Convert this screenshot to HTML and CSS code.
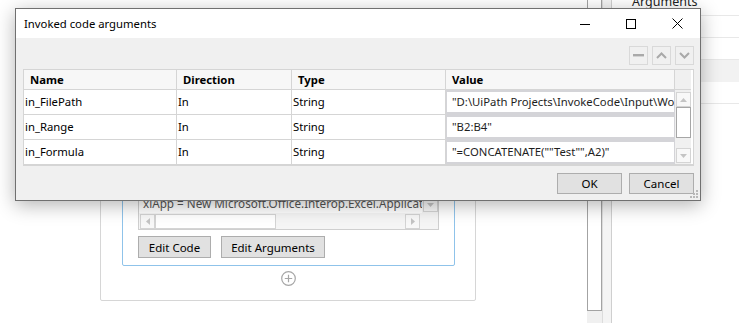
FILE: index.html
```html
<!DOCTYPE html>
<html lang="en">
<head>
    <meta charset="UTF-8">
    <title>Invoked code arguments</title>
    <link rel="stylesheet" href="styles.css">
</head>
<body>
    <div class="workspace">
        <div class="canvas">
            <div class="sequence">
                <div class="activity">
                    <div class="editor">
                        <div class="code">xlApp = New Microsoft.Office.Interop.Excel.Application</div>
                        <div class="vscroll">
                            <span class="arrow-box"><svg width="7" height="4" viewBox="0 0 7 4"><path d="M0 0h7L3.5 4z" fill="#c4c4c4"/></svg></span>
                        </div>
                        <div class="hscroll">
                            <span class="arrow-box"><svg width="4" height="7" viewBox="0 0 4 7"><path d="M4 0v7L0 3.5z" fill="#c4c4c4"/></svg></span>
                            <span class="hthumb"></span>
                            <span class="spacer"></span>
                            <span class="arrow-box"><svg width="4" height="7" viewBox="0 0 4 7"><path d="M0 0v7l4-3.5z" fill="#c4c4c4"/></svg></span>
                        </div>
                        <div class="corner"></div>
                    </div>
                    <div class="activity-buttons">
                        <button class="btn edit-code">Edit Code</button>
                        <button class="btn edit-args">Edit Arguments</button>
                    </div>
                </div>
                <div class="add">
                    <svg width="15" height="15" viewBox="0 0 15 15">
                        <circle cx="7.5" cy="7.5" r="6.8" fill="none" stroke="#a6a6a6" stroke-width="1.2"/>
                        <path d="M7.5 3.8v7.4M3.8 7.5h7.4" stroke="#a6a6a6" stroke-width="1.2"/>
                    </svg>
                </div>
            </div>
        </div>
        <div class="side-scroll"><div class="side-thumb"></div></div>
        <div class="side-gap"></div>
        <div class="panel">
            <div class="panel-row title">Arguments</div>
            <div class="panel-row"></div>
            <div class="panel-row"></div>
            <div class="panel-row selected"></div>
            <div class="panel-row"></div>
        </div>

        <div class="dialog">
            <div class="titlebar">
                <span class="title">Invoked code arguments</span>
                <span class="caption-btn">
                    <svg width="10" height="10" viewBox="0 0 10 10"><path d="M0 5.5h10" stroke="#000" stroke-width="1"/></svg>
                </span>
                <span class="caption-btn">
                    <svg width="10" height="10" viewBox="0 0 10 10"><rect x="0.5" y="0.5" width="9" height="9" fill="none" stroke="#000" stroke-width="1"/></svg>
                </span>
                <span class="caption-btn">
                    <svg width="11" height="11" viewBox="0 0 11 11"><path d="M0.5 0.5l10 10M10.5 0.5l-10 10" stroke="#000" stroke-width="1"/></svg>
                </span>
            </div>
            <div class="dialog-body">
                <div class="toolbar">
                    <span class="tool-btn"><svg width="11" height="3" viewBox="0 0 11 3"><rect width="11" height="2.4" fill="#a9a9a9"/></svg></span>
                    <span class="tool-btn"><svg width="11" height="7" viewBox="0 0 11 7"><path d="M1 6l4.5-4.5L10 6" fill="none" stroke="#a9a9a9" stroke-width="2"/></svg></span>
                    <span class="tool-btn"><svg width="11" height="7" viewBox="0 0 11 7"><path d="M1 1l4.5 4.5L10 1" fill="none" stroke="#a9a9a9" stroke-width="2"/></svg></span>
                </div>
                <div class="grid">
                    <div class="head">Name</div>
                    <div class="head">Direction</div>
                    <div class="head">Type</div>
                    <div class="head">Value</div>
                    <div class="head blank"></div>

                    <div class="cell">in_FilePath</div>
                    <div class="cell">In</div>
                    <div class="cell">String</div>
                    <div class="cell value"><span class="value-box">"D:\UiPath Projects\InvokeCode\Input\WorkBook.xlsx"</span></div>
                    <div class="scroll">
                        <span class="arrow-box"><svg width="7" height="4" viewBox="0 0 7 4"><path d="M0 4h7L3.5 0z" fill="#c4c4c4"/></svg></span>
                        <span class="vthumb"></span>
                        <span class="spacer"></span>
                        <span class="arrow-box"><svg width="7" height="4" viewBox="0 0 7 4"><path d="M0 0h7L3.5 4z" fill="#c4c4c4"/></svg></span>
                    </div>

                    <div class="cell">in_Range</div>
                    <div class="cell">In</div>
                    <div class="cell">String</div>
                    <div class="cell value"><span class="value-box">"B2:B4"</span></div>

                    <div class="cell last">in_Formula</div>
                    <div class="cell last">In</div>
                    <div class="cell last">String</div>
                    <div class="cell value last"><span class="value-box">"=CONCATENATE(""Test"",A2)"</span></div>
                </div>
                <div class="footer">
                    <button class="btn dlg-btn">OK</button>
                    <button class="btn dlg-btn">Cancel</button>
                </div>
            </div>
            <svg class="grip" width="8" height="8" viewBox="0 0 8 8">
                <rect x="6" y="0" width="2" height="2" fill="#b8b8b8"/>
                <rect x="3" y="3" width="2" height="2" fill="#b8b8b8"/>
                <rect x="6" y="3" width="2" height="2" fill="#b8b8b8"/>
                <rect x="0" y="6" width="2" height="2" fill="#b8b8b8"/>
                <rect x="3" y="6" width="2" height="2" fill="#b8b8b8"/>
                <rect x="6" y="6" width="2" height="2" fill="#b8b8b8"/>
            </svg>
        </div>
    </div>
</body>
</html>
```

FILE: styles.css
```css
body {
    margin: 0;
    font-family: "Segoe UI", "Noto Sans", sans-serif;
    font-size: 11.3px;
    color: #000;
    background-color: white;
    overflow: hidden;
}

.workspace {
    position: relative;
    display: flex;
    height: 323px;
}

/* designer behind the dialog */
.canvas {
    width: 587px;
    flex: none;
}

.sequence {
    box-sizing: border-box;
    width: 376px;
    height: 281px;
    margin: 20px 0 0 100px;
    border: 1px solid #d6d6d6;
    border-radius: 2px;
    display: flex;
    flex-direction: column;
}

.activity {
    box-sizing: border-box;
    width: 333px;
    height: 226px;
    margin: 19px 0 0 21px;
    padding: 0 15px 7px;
    border: 1px solid #8fc3ea;
    border-radius: 2px;
    display: flex;
    flex-direction: column;
    gap: 6px;
}

.editor {
    flex: 1;
    display: grid;
    grid-template-columns: 1fr 16px;
    grid-template-rows: 1fr 16px;
    border: 1px solid #cfcfcf;
    background-color: white;
}

.code {
    align-self: end;
    padding: 0 0 2px 4px;
    line-height: 16px;
    font-size: 11.7px;
    color: #555;
    white-space: nowrap;
    overflow: hidden;
}

.vscroll {
    display: flex;
    flex-direction: column;
    justify-content: flex-end;
    align-items: center;
    padding-bottom: 1px;
    background-color: #f5f5f5;
}

.hscroll {
    display: flex;
    align-items: center;
    padding: 0 2px 0 1px;
    background-color: #f5f5f5;
}

.hscroll .hthumb {
    width: 119px;
    height: 13px;
    border: 1px solid #d4d4d4;
    background-color: white;
}

.spacer {
    flex: 1;
}

.corner {
    background-color: #f5f5f5;
}

.arrow-box {
    box-sizing: border-box;
    width: 15px;
    height: 15px;
    border: 1px solid #d4d4d4;
    background-color: #f8f8f8;
    display: flex;
    align-items: center;
    justify-content: center;
}

.activity-buttons {
    display: flex;
    gap: 10px;
}

.btn {
    box-sizing: border-box;
    height: 22px;
    padding: 0;
    font-family: inherit;
    font-size: 11.5px;
    color: #000;
    background-color: #e1e1e1;
    border: 1px solid #adadad;
}

.edit-code {
    width: 73px;
}

.edit-args {
    width: 104px;
}

.add {
    align-self: center;
    margin-top: 5px;
    height: 15px;
}

.side-scroll {
    width: 15px;
    flex: none;
    background-color: #f0f0f0;
}

.side-thumb {
    box-sizing: border-box;
    height: 313px;
    margin-top: -2px;
    border: 1px solid #a3a3a3;
    background-color: white;
}

.side-gap {
    width: 8px;
    flex: none;
    background-color: #f4f4f4;
    border-left: 1px solid #dcdcdc;
    border-right: 1px solid #cfcfcf;
}

.panel {
    flex: 1;
    margin-top: -7px;
}

.panel-row {
    height: 21px;
    border-bottom: 1px solid #e8e8e8;
}

.panel-row.title {
    height: 22px;
    padding-left: 20px;
    line-height: 18px;
    font-size: 12.5px;
    color: #222;
}

.panel-row.selected {
    background-color: #f2f2f2;
    border-bottom-color: #f2f2f2;
}

/* the dialog window */
.dialog {
    position: absolute;
    left: 15px;
    top: 8px;
    box-sizing: border-box;
    width: 686px;
    height: 193px;
    border: 1px solid #707070;
    background-color: #f0f0f0;
    box-shadow: 0 4px 18px rgba(0, 0, 0, 0.3);
    display: flex;
    flex-direction: column;
}

.titlebar {
    height: 29px;
    background-color: white;
    display: flex;
    align-items: center;
}

.title {
    flex: 1;
    padding-left: 8px;
}

.caption-btn {
    width: 46px;
    height: 29px;
    display: flex;
    align-items: center;
    justify-content: center;
}

.dialog-body {
    flex: 1;
    padding: 8px 6px 0 7px;
    display: flex;
    flex-direction: column;
}

.toolbar {
    display: flex;
    justify-content: flex-end;
    gap: 4px;
}

.tool-btn {
    box-sizing: border-box;
    width: 19px;
    height: 19px;
    border: 1px solid #d9d9d9;
    display: flex;
    align-items: center;
    justify-content: center;
}

.grid {
    margin-top: 4px;
    width: 669px;
    display: grid;
    grid-template-columns: 153px 115px 154px 229px 16px;
    grid-template-rows: 20px 25px 25px 24px;
    border: 1px solid #d5d5d5;
    border-bottom-width: 2px;
    background-color: white;
}

.head {
    padding-left: 6px;
    font-weight: bold;
    line-height: 19px;
    background-color: #f7f7f7;
    border-right: 1px solid #d5d5d5;
    border-bottom: 1px solid #d5d5d5;
}

.head.blank {
    padding: 0;
    border-right: none;
    background-color: #f0f0f0;
}

.cell {
    padding-left: 1px;
    line-height: 24px;
    white-space: nowrap;
    border-right: 1px solid #d5d5d5;
    border-bottom: 1px solid #d5d5d5;
}

.cell.last {
    border-bottom: none;
    line-height: 24px;
}

.cell.value {
    padding: 2px 1px 2px 1px;
    background-color: #d4d4d8;
    border-bottom: 1px solid #d4d4d8;
    border-right: none;
    display: flex;
}

.cell.value.last {
    border-bottom: none;
}

.value-box {
    flex: 1;
    padding-left: 5px;
    line-height: 20px;
    font-size: 11.3px;
    background-color: white;
    color: #1e1e1e;
    overflow: hidden;
    white-space: nowrap;
}

.scroll {
    grid-column: 5;
    grid-row: 2 / 5;
    padding: 2px 0 1px 1px;
    display: flex;
    flex-direction: column;
    background-color: #f0f0f0;
}

.vthumb {
    box-sizing: border-box;
    width: 15px;
    height: 31px;
    border: 1px solid #a6a6a6;
    background-color: white;
}

.footer {
    margin-top: 7px;
    display: flex;
    justify-content: flex-end;
    gap: 7px;
}

.dlg-btn {
    width: 65px;
    height: 21px;
}

.grip {
    position: absolute;
    right: 2px;
    bottom: 2px;
}
```
